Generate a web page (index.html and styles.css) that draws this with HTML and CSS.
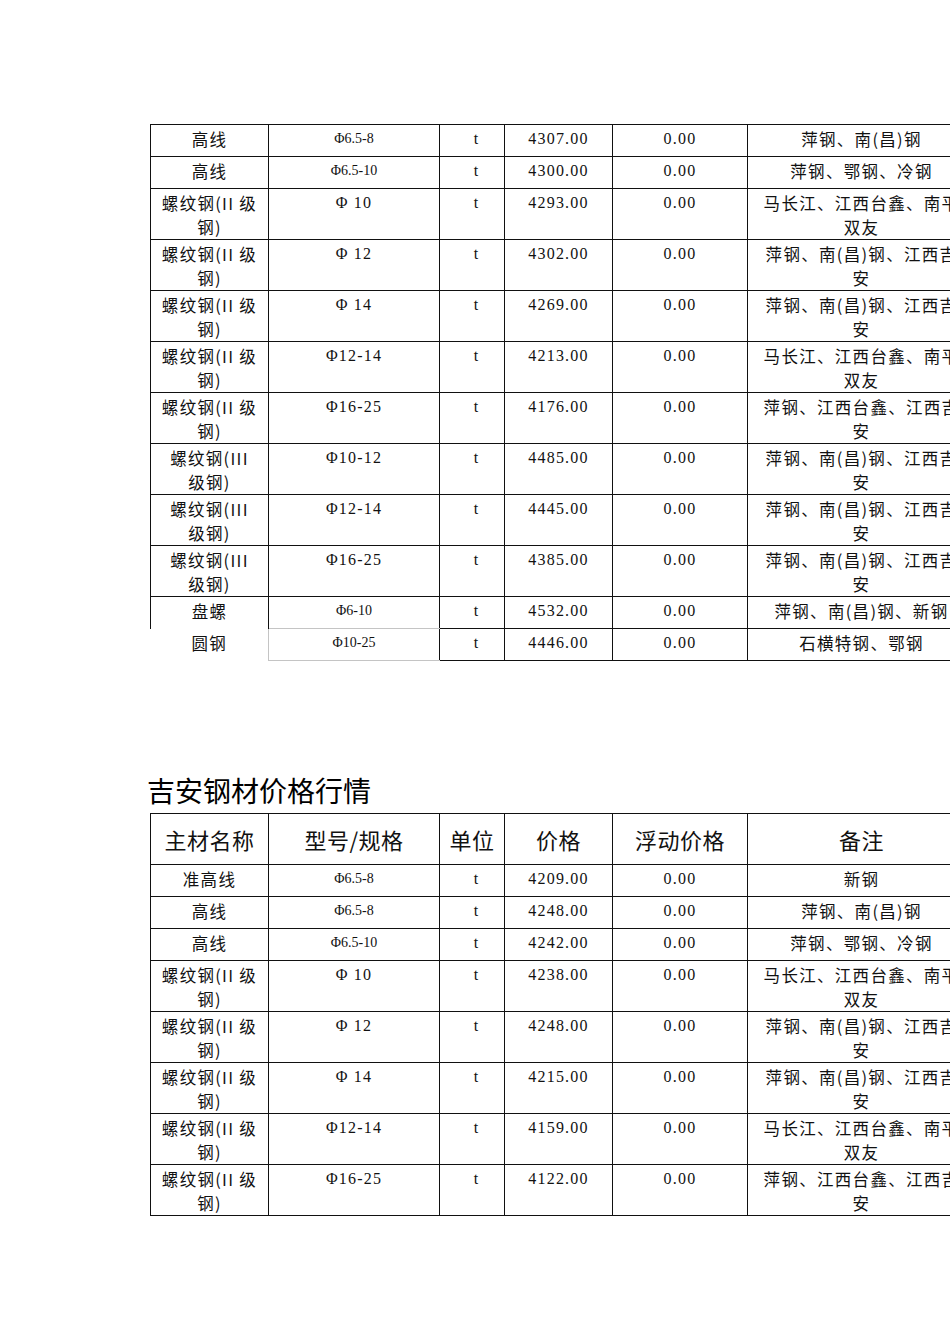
FILE: index.html
```html
<!DOCTYPE html>
<html lang="zh-CN">
<head>
<meta charset="utf-8">
<title>吉安钢材价格行情</title>
<link rel="stylesheet" href="styles.css">
</head>
<body>
<div class="page">
  <table class="price first">
    <colgroup>
      <col class="w1"><col class="w2"><col class="w3"><col class="w4"><col class="w5"><col class="w6">
    </colgroup>
    <tbody>
      <tr><td class="c1">高线</td><td class="c2 tnr">Φ6.5-8</td><td class="c3 num">t</td><td class="num">4307.00</td><td class="num">0.00</td><td class="c6">萍钢、南(昌)钢</td></tr>
      <tr><td class="c1">高线</td><td class="c2 tnr">Φ6.5-10</td><td class="c3 num">t</td><td class="num">4300.00</td><td class="num">0.00</td><td class="c6">萍钢、鄂钢、冷钢</td></tr>
      <tr><td class="c1">螺纹钢(II 级<br>钢)</td><td class="c2 num">Φ 10</td><td class="c3 num">t</td><td class="num">4293.00</td><td class="num">0.00</td><td class="c6">马长江、江西台鑫、南平<br>双友</td></tr>
      <tr><td class="c1">螺纹钢(II 级<br>钢)</td><td class="c2 num">Φ 12</td><td class="c3 num">t</td><td class="num">4302.00</td><td class="num">0.00</td><td class="c6">萍钢、南(昌)钢、江西吉<br>安</td></tr>
      <tr><td class="c1">螺纹钢(II 级<br>钢)</td><td class="c2 num">Φ 14</td><td class="c3 num">t</td><td class="num">4269.00</td><td class="num">0.00</td><td class="c6">萍钢、南(昌)钢、江西吉<br>安</td></tr>
      <tr><td class="c1">螺纹钢(II 级<br>钢)</td><td class="c2 num">Φ12-14</td><td class="c3 num">t</td><td class="num">4213.00</td><td class="num">0.00</td><td class="c6">马长江、江西台鑫、南平<br>双友</td></tr>
      <tr><td class="c1">螺纹钢(II 级<br>钢)</td><td class="c2 num">Φ16-25</td><td class="c3 num">t</td><td class="num">4176.00</td><td class="num">0.00</td><td class="c6">萍钢、江西台鑫、江西吉<br>安</td></tr>
      <tr><td class="c1">螺纹钢(III<br>级钢)</td><td class="c2 num">Φ10-12</td><td class="c3 num">t</td><td class="num">4485.00</td><td class="num">0.00</td><td class="c6">萍钢、南(昌)钢、江西吉<br>安</td></tr>
      <tr><td class="c1">螺纹钢(III<br>级钢)</td><td class="c2 num">Φ12-14</td><td class="c3 num">t</td><td class="num">4445.00</td><td class="num">0.00</td><td class="c6">萍钢、南(昌)钢、江西吉<br>安</td></tr>
      <tr><td class="c1">螺纹钢(III<br>级钢)</td><td class="c2 num">Φ16-25</td><td class="c3 num">t</td><td class="num">4385.00</td><td class="num">0.00</td><td class="c6">萍钢、南(昌)钢、江西吉<br>安</td></tr>
      <tr class="pan"><td class="c1">盘螺</td><td class="c2 tnr">Φ6-10</td><td class="c3 num">t</td><td class="num">4532.00</td><td class="num">0.00</td><td class="c6">萍钢、南(昌)钢、新钢</td></tr>
      <tr class="yuan"><td class="c1">圆钢</td><td class="c2 tnr">Φ10-25</td><td class="c3 num">t</td><td class="num">4446.00</td><td class="num">0.00</td><td class="c6">石横特钢、鄂钢</td></tr>
    </tbody>
  </table>

  <h2 class="title">吉安钢材价格行情</h2>

  <table class="price">
    <colgroup>
      <col class="w1"><col class="w2"><col class="w3"><col class="w4"><col class="w5"><col class="w6">
    </colgroup>
    <thead>
      <tr class="head"><th>主材名称</th><th>型号/规格</th><th>单位</th><th>价格</th><th>浮动价格</th><th>备注</th></tr>
    </thead>
    <tbody>
      <tr><td class="c1">准高线</td><td class="c2 tnr">Φ6.5-8</td><td class="c3 num">t</td><td class="num">4209.00</td><td class="num">0.00</td><td class="c6">新钢</td></tr>
      <tr><td class="c1">高线</td><td class="c2 tnr">Φ6.5-8</td><td class="c3 num">t</td><td class="num">4248.00</td><td class="num">0.00</td><td class="c6">萍钢、南(昌)钢</td></tr>
      <tr><td class="c1">高线</td><td class="c2 tnr">Φ6.5-10</td><td class="c3 num">t</td><td class="num">4242.00</td><td class="num">0.00</td><td class="c6">萍钢、鄂钢、冷钢</td></tr>
      <tr><td class="c1">螺纹钢(II 级<br>钢)</td><td class="c2 num">Φ 10</td><td class="c3 num">t</td><td class="num">4238.00</td><td class="num">0.00</td><td class="c6">马长江、江西台鑫、南平<br>双友</td></tr>
      <tr><td class="c1">螺纹钢(II 级<br>钢)</td><td class="c2 num">Φ 12</td><td class="c3 num">t</td><td class="num">4248.00</td><td class="num">0.00</td><td class="c6">萍钢、南(昌)钢、江西吉<br>安</td></tr>
      <tr><td class="c1">螺纹钢(II 级<br>钢)</td><td class="c2 num">Φ 14</td><td class="c3 num">t</td><td class="num">4215.00</td><td class="num">0.00</td><td class="c6">萍钢、南(昌)钢、江西吉<br>安</td></tr>
      <tr><td class="c1">螺纹钢(II 级<br>钢)</td><td class="c2 num">Φ12-14</td><td class="c3 num">t</td><td class="num">4159.00</td><td class="num">0.00</td><td class="c6">马长江、江西台鑫、南平<br>双友</td></tr>
      <tr><td class="c1">螺纹钢(II 级<br>钢)</td><td class="c2 num">Φ16-25</td><td class="c3 num">t</td><td class="num">4122.00</td><td class="num">0.00</td><td class="c6">萍钢、江西台鑫、江西吉<br>安</td></tr>
    </tbody>
  </table>
</div>
</body>
</html>
```

FILE: styles.css
```css
html, body {
  margin: 0;
  padding: 0;
  background: #fff;
  overflow: hidden;
}

body {
  width: 950px;
  height: 1344px;
  color: #111;
  font-family: "Noto Sans CJK SC", "Liberation Serif", serif;
}

.page {
  padding: 124px 0 0 150px;
}

.price {
  border-collapse: collapse;
  table-layout: fixed;
  width: 825px;
}

.w1 { width: 118px; }
.w2 { width: 171px; }
.w3 { width: 65px; }
.w4 { width: 108px; }
.w5 { width: 135px; }
.w6 { width: 228px; }

.price td,
.price th {
  border: 1px solid #111;
  padding: 2px 0 0;
  height: 29px;
  text-align: center;
  vertical-align: top;
  line-height: 24px;
  font-size: 16.5px;
  letter-spacing: 1.3px;
  font-weight: normal;
  white-space: nowrap;
  overflow: hidden;
}

.price th {
  height: 50px;
  padding: 0;
  vertical-align: middle;
  font-size: 22px;
  letter-spacing: 0.5px;
}

.price .num {
  font-family: "Liberation Serif", serif;
  font-size: 16px;
  letter-spacing: 1.2px;
}

.price .tnr {
  font-family: "Liberation Serif", serif;
  font-size: 14px;
  letter-spacing: 0;
}

.price .c3 {
  padding-left: 9px;
}

/* irregular borders at the end of the first table */
.price tr.pan td.c1 {
  border-bottom: none;
}

.price tr.pan td.c2 {
  border-bottom-color: #c4c4c4;
}

.price tr.yuan td.c1 {
  border-top: none;
  border-left: none;
  border-bottom: none;
  border-right: 1px solid #c4c4c4;
}

.price tr.yuan td.c2 {
  border-top-color: #c4c4c4;
  border-bottom-color: #c4c4c4;
}

.title {
  margin: 111px 0 5px -3px;
  font-size: 28px;
  line-height: 36px;
  font-weight: normal;
  color: #000;
  letter-spacing: 0;
}
```
